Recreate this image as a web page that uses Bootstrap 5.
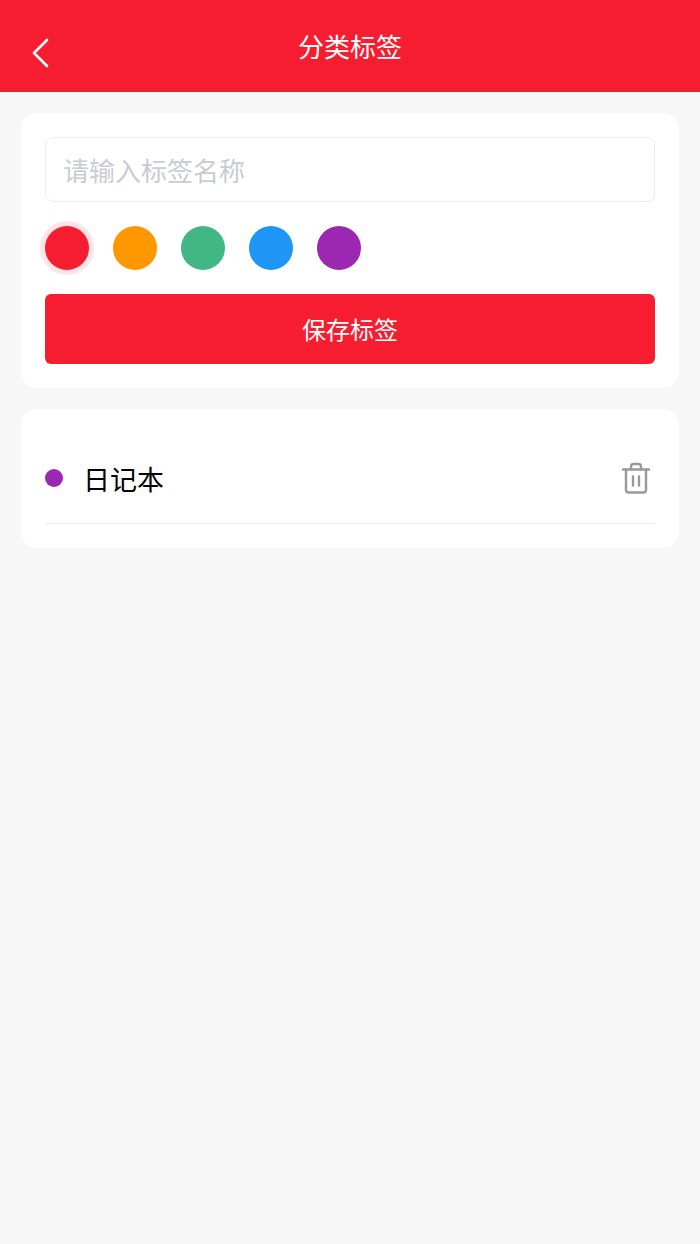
<!DOCTYPE html>
<html lang="zh-CN">
<head>
<meta charset="utf-8">
<title>分类标签</title>
<link rel="stylesheet" href="https://cdn.jsdelivr.net/npm/bootstrap@5.3.0/dist/css/bootstrap.min.css">
<style>
html,body{height:100%}
body{background:#f7f7f7;font-family:"Noto Sans CJK SC","Liberation Sans",sans-serif;color:#000}
.topbar{height:92px;background:#f61d30;color:#fff;position:relative}
.topbar-title{font-size:26px;line-height:1;font-weight:400}
.back-btn{position:absolute;left:30px;top:37px;width:22px;height:32px;line-height:0}
.sheet{background:#fff;border-radius:16px;margin:0 21px;padding:24px}
.sheet-first{margin-top:21px;margin-bottom:21px}
.name-input{height:65px;border:1.5px solid #ebedf0;border-radius:8px;font-size:26px;padding:0 17px;color:#000;box-shadow:none}
.name-input::placeholder{color:#c8ccd3;opacity:1}
.swatches{gap:24px;margin-top:24px;margin-bottom:24px}
.swatch{width:44px;height:44px;border-radius:50%;flex:none}
.swatch-on{box-shadow:0 0 0 5px rgba(246,29,48,.12)}
.save-btn{height:70px;background:#f61d30;border:0;border-radius:6px;color:#fff;font-size:24px;width:100%}
.sheet-list{padding-bottom:24px;padding-top:24px}
.tag-row{height:91px;border-bottom:1.5px solid #ebedf0}
.tag-dot{width:18px;height:18px;border-radius:50%;background:#9c27b0;flex:none;margin-right:20px}
.tag-name{font-size:27px;line-height:1}
.trash{width:30px;height:32px;margin-right:4px;display:block}
</style>
</head>
<body>
<header class="topbar d-flex align-items-center justify-content-center">
  <a class="back-btn" href="#" aria-label="返回">
    <svg width="22" height="32" viewBox="0 0 22 32" fill="none"><path d="M17 3 4 16l13 13" stroke="#fff" stroke-width="2.6" stroke-linecap="round" stroke-linejoin="round"/></svg>
  </a>
  <div class="topbar-title">分类标签</div>
</header>
<section class="sheet sheet-first">
  <input class="form-control name-input" type="text" placeholder="请输入标签名称">
  <div class="d-flex swatches">
    <div class="swatch swatch-on" style="background:#f61d30"></div>
    <div class="swatch" style="background:#ff9800"></div>
    <div class="swatch" style="background:#41b883"></div>
    <div class="swatch" style="background:#1e96f5"></div>
    <div class="swatch" style="background:#9c27b0"></div>
  </div>
  <button class="btn save-btn d-flex align-items-center justify-content-center" type="button">保存标签</button>
</section>
<section class="sheet sheet-list">
  <div class="tag-row d-flex align-items-center">
    <span class="tag-dot"></span>
    <span class="tag-name flex-grow-1">日记本</span>
    <svg class="trash" viewBox="0 0 30 32" fill="none" stroke="#999" stroke-width="2.4" stroke-linecap="round" stroke-linejoin="round">
      <path d="M2 7.5h26"/>
      <path d="M10 7V4.5C10 3 11 2 12.5 2h5C19 2 20 3 20 4.5V7"/>
      <path d="M5 8v20c0 1.500 1 2.500 2.500 2.500h15c1.500 0 2.500-1 2.500-2.500V8"/>
      <path d="M12 14.500v9M18 14.500v9"/>
    </svg>
  </div>
</section>
<script src="https://cdn.jsdelivr.net/npm/bootstrap@5.3.0/dist/js/bootstrap.bundle.min.js"></script>
</body>
</html>
